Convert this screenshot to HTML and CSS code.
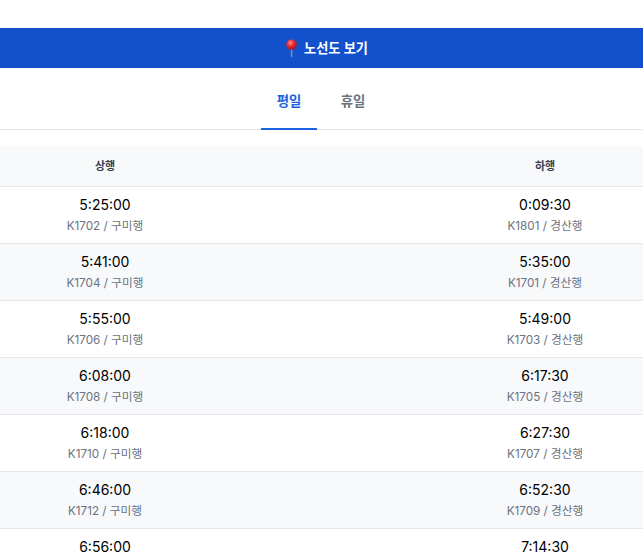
FILE: index.html
```html
<!DOCTYPE html>
<html lang="ko">
<head>
<meta charset="utf-8">
<title>노선도 보기</title>
<link rel="stylesheet" href="styles.css">
</head>
<body>
<a class="banner" href="#">
<svg class="pin" width="29" height="18" viewBox="0 0 29 18"><defs><radialGradient id="g" cx="0.4" cy="0.35" r="0.7"><stop offset="0" stop-color="#ff8a8f"/><stop offset="0.5" stop-color="#e2252f"/><stop offset="1" stop-color="#a3141e"/></radialGradient></defs><rect x="15.8" y="9" width="1.5" height="9" fill="#8a8f98"/><circle cx="16.5" cy="5.5" r="5.3" fill="url(#g)"/></svg>
<span>노선도 보기</span></a>
<nav class="tabs">
<span class="tab active">평일</span>
<span class="tab">휴일</span>
</nav>
<div class="table">
<div class="row head"><div class="cell">상행</div><div class="cell">하행</div></div>
<div class="row"><div class="cell"><div class="time">5:25:00</div><div class="sub">K1702 / 구미행</div></div><div class="cell"><div class="time">0:09:30</div><div class="sub">K1801 / 경산행</div></div></div>
<div class="row alt"><div class="cell"><div class="time">5:41:00</div><div class="sub">K1704 / 구미행</div></div><div class="cell"><div class="time">5:35:00</div><div class="sub">K1701 / 경산행</div></div></div>
<div class="row"><div class="cell"><div class="time">5:55:00</div><div class="sub">K1706 / 구미행</div></div><div class="cell"><div class="time">5:49:00</div><div class="sub">K1703 / 경산행</div></div></div>
<div class="row alt"><div class="cell"><div class="time">6:08:00</div><div class="sub">K1708 / 구미행</div></div><div class="cell"><div class="time">6:17:30</div><div class="sub">K1705 / 경산행</div></div></div>
<div class="row"><div class="cell"><div class="time">6:18:00</div><div class="sub">K1710 / 구미행</div></div><div class="cell"><div class="time">6:27:30</div><div class="sub">K1707 / 경산행</div></div></div>
<div class="row alt"><div class="cell"><div class="time">6:46:00</div><div class="sub">K1712 / 구미행</div></div><div class="cell"><div class="time">6:52:30</div><div class="sub">K1709 / 경산행</div></div></div>
<div class="row"><div class="cell"><div class="time">6:56:00</div><div class="sub">K1714 / 구미행</div></div><div class="cell"><div class="time">7:14:30</div><div class="sub">K1711 / 경산행</div></div></div>
</div>
</body>
</html>
```
FILE: styles.css
```css
html, body { margin: 0; padding: 0; overflow: hidden; height: 555px; }
body { background: #fff; font-family: Inter, "Noto Sans CJK KR", sans-serif; color: #000; padding-top: 28px; box-sizing: border-box; }
.banner { display: flex; justify-content: center; align-items: center; height: 40px; padding-bottom: 1px; box-sizing: border-box; background: #1351cc; color: #fff; font-size: 13.2px; font-weight: 600; text-decoration: none; }
.pin { flex: none; }
.tabs { display: flex; justify-content: center; gap: 8px; height: 61px; padding-right: 1px; border-bottom: 1px solid #e5e7eb; margin-bottom: 16px; }
.tab { display: flex; align-items: center; justify-content: center; width: 56px; font-size: 13.4px; font-weight: 600; color: #6b7280; box-sizing: border-box; border-bottom: 2px solid transparent; height: 62px; padding-top: 4px; }
.tab.active { color: #1a62e0; border-bottom-color: #1a62e0; }
.row { display: flex; justify-content: space-between; height: 57px; box-sizing: border-box; border-bottom: 1px solid #e5e7eb; }
.row.alt { background: #f8f9fb; }
.row.head { height: 41px; background: #f8f9fb; font-size: 11px; font-weight: 600; color: #374151; padding-bottom: 2px; }
.cell { display: flex; flex-direction: column; align-items: center; justify-content: center; width: 210px; }
.cell:last-child { width: 196px; }
.time { font-size: 14px; line-height: 20px; }
.sub { font-size: 11.7px; line-height: 18px; color: #6b7280; margin-top: 2px; }
```
